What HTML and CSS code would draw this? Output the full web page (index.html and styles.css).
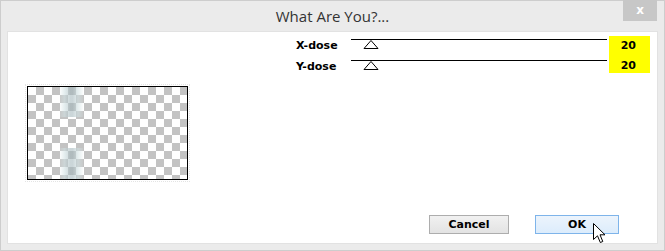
FILE: index.html
```html
<!DOCTYPE html>
<html>
<head>
<meta charset="utf-8">
<link rel="stylesheet" href="styles.css">
</head>
<body>
<div class="window">
  <div class="titlebar">
    <span class="title">What Are You?...</span>
    <div class="close">x</div>
  </div>
  <div class="content">
    <div class="controls">
      <div class="sliders">
        <div class="row">
          <span class="label">X-dose</span>
          <div class="track"><svg class="thumb" width="16" height="9" viewBox="0 0 16 9"><polygon points="8,0.5 15,8.5 1,8.5" fill="#fff" stroke="#000" stroke-width="1"/></svg></div>
        </div>
        <div class="row">
          <span class="label">Y-dose</span>
          <div class="track"><svg class="thumb" width="16" height="9" viewBox="0 0 16 9"><polygon points="8,0.5 15,8.5 1,8.5" fill="#fff" stroke="#000" stroke-width="1"/></svg></div>
        </div>
      </div>
      <div class="values">
        <span class="val">20</span>
        <span class="val">20</span>
      </div>
    </div>
    <div class="preview-wrap">
      <div class="preview">
        <div class="ghost ghost-top"></div>
        <div class="ghost ghost-bottom"></div>
      </div>
    </div>
    <div class="buttons">
      <button class="btn">Cancel</button>
      <button class="btn btn-ok">OK</button>
    </div>
    <svg class="cursor" width="13" height="21" viewBox="0 0 13 21"><path d="M0.5 0.5 L0.5 16.5 L4.5 12.8 L7.3 19.5 L9.8 18.5 L7 11.8 L12 11.8 Z" fill="#fff" stroke="#000" stroke-width="1" stroke-linejoin="miter"/></svg>
  </div>
</div>
</body>
</html>
```
FILE: styles.css
```css
html, body {
  margin: 0;
  padding: 0;
}
body {
  width: 665px;
  height: 251px;
  overflow: hidden;
  background: #ebebeb;
}
.window {
  box-sizing: border-box;
  width: 665px;
  height: 251px;
  border: 1px solid #cdcdcd;
  background: #ebebeb;
  padding: 0 7px 7px 7px;
  display: flex;
  flex-direction: column;
}
.titlebar {
  position: relative;
  height: 31px;
  display: flex;
  align-items: center;
  justify-content: center;
}
.title {
  font-family: "Open Sans", "Noto Sans", sans-serif;
  font-size: 15px;
  color: #333;
  margin-top: -2px;
}
.close {
  position: absolute;
  top: -1px;
  right: 0px;
  width: 34px;
  height: 21px;
  background: #c7c7c7;
  color: #fff;
  font-family: "DejaVu Sans", sans-serif;
  font-weight: bold;
  font-size: 12px;
  line-height: 20px;
  text-align: center;
}
.content {
  position: relative;
  flex: 1;
  background: #fff;
  display: flex;
  flex-direction: column;
  box-shadow: 0 0 0 1px #e2e2e2;
}
.controls {
  display: flex;
  margin-top: 4px;
  margin-left: 288px;
}
.sliders {
  padding-top: 3px;
  display: flex;
  flex-direction: column;
}
.row {
  display: flex;
  height: 21px;
}
.label {
  width: 55px;
  font-family: "DejaVu Sans", sans-serif;
  font-weight: bold;
  font-size: 11px;
  line-height: 14px;
  color: #000;
}
.track {
  width: 256px;
  height: 20px;
  border-top: 1px solid #000;
  padding-left: 12px;
  box-sizing: border-box;
}
.thumb {
  display: block;
}
.values {
  margin-left: 2px;
  width: 41px;
  height: 37px;
  background: #ffff00;
  box-sizing: border-box;
  padding-right: 14px;
  display: flex;
  flex-direction: column;
  align-items: flex-end;
}
.val {
  font-family: "DejaVu Sans", sans-serif;
  font-weight: bold;
  font-size: 11px;
  line-height: 20px;
  color: #000;
}
.preview-wrap {
  margin-top: 5px;
  margin-left: 19px;
}
.preview {
  position: relative;
  width: 159px;
  height: 92px;
  border: 1px solid #000;
  background-color: #fff;
  background-image:
    linear-gradient(45deg, #c3c3c3 25%, transparent 25%, transparent 75%, #c3c3c3 75%),
    linear-gradient(45deg, #c3c3c3 25%, transparent 25%, transparent 75%, #c3c3c3 75%);
  background-size: 16px 16px;
  background-position: 0 0, 8px 8px;
  outline: 1px dotted #e4e4e4;
  outline-offset: 1px;
}
.ghost {
  position: absolute;
  left: 32px;
  width: 23px;
  background: linear-gradient(90deg,
    rgba(225,236,236,0.15) 0%,
    rgba(210,226,228,0.6) 20%,
    rgba(160,180,185,0.55) 45%,
    rgba(160,180,185,0.55) 55%,
    rgba(210,226,228,0.6) 78%,
    rgba(225,236,236,0.15) 100%);
}
.ghost-top {
  top: 0;
  height: 30px;
}
.ghost-bottom {
  top: 61px;
  height: 31px;
}
.buttons {
  margin-top: auto;
  display: flex;
  justify-content: flex-end;
  gap: 26px;
  padding-right: 38px;
  padding-bottom: 9px;
}
.btn {
  box-sizing: border-box;
  height: 19px;
  width: 80px;
  padding: 0;
  border: 1px solid #adadad;
  background: linear-gradient(#f1f1f1, #e3e3e3);
  font-family: "DejaVu Sans", sans-serif;
  font-weight: bold;
  font-size: 11px;
  color: #000;
  line-height: 17px;
}
.btn-ok {
  width: 84px;
  border-color: #7eb4ea;
  background: linear-gradient(#ecf4fc, #dcecfc);
}
.cursor {
  position: absolute;
  left: 585px;
  top: 191px;
}
```
